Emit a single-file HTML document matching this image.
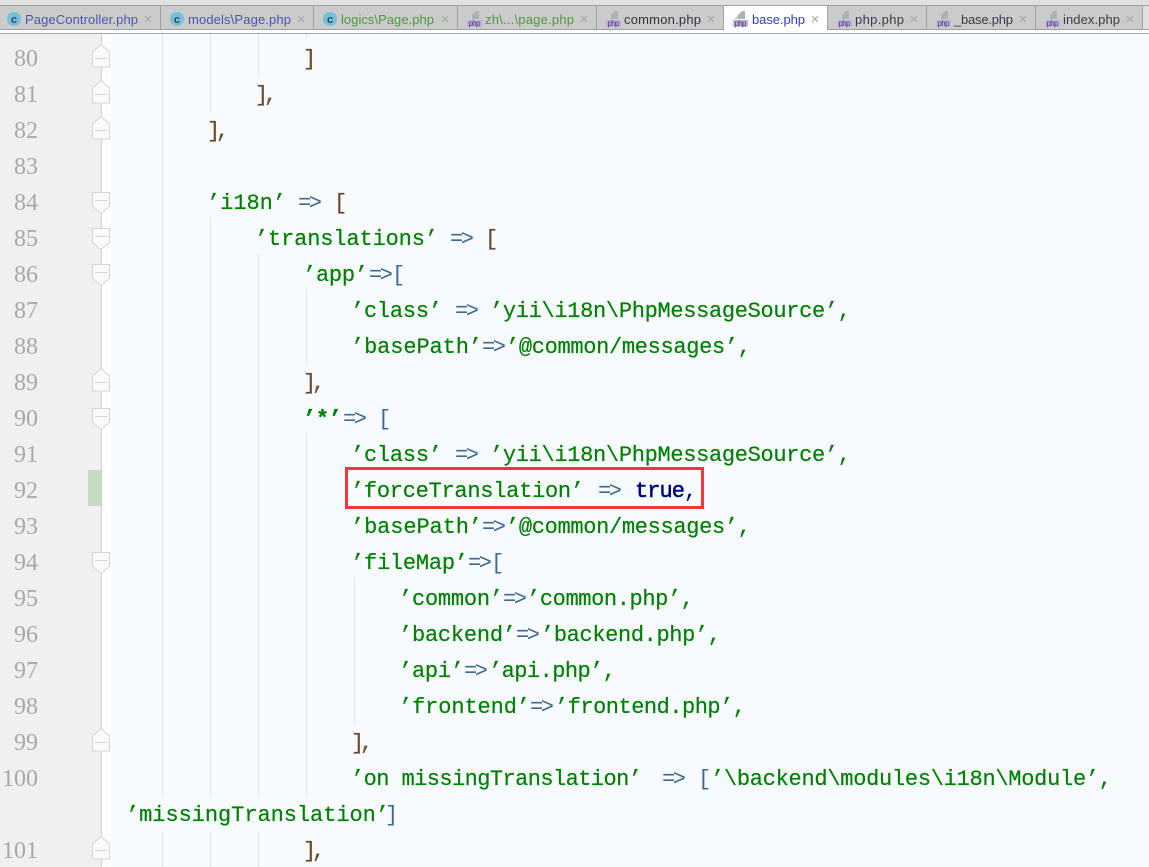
<!DOCTYPE html>
<html><head><meta charset="utf-8"><style>
html,body{margin:0;padding:0;width:1149px;height:867px;overflow:hidden;background:#f7faff}
svg{display:block}
.t{font:13px "Liberation Sans",sans-serif}
.c{font:22px "Liberation Mono",monospace;stroke-width:.2}
.s{fill:#008000;stroke:#008000}
.o{fill:#3d6a90;stroke:none}
.b{fill:#6b4a2c;stroke:#6b4a2c}
.bb{fill:#3a6a98;stroke:none}
.k{fill:#000080;stroke:#000080;stroke-width:.5}
.n{font:24px "Liberation Serif",serif;fill:#a8a8a8;text-anchor:end}
.g{stroke:#e3e3e3;stroke-width:1;fill:none}
.f{fill:#fafafa;stroke:#d4d4d4;stroke-width:1}
.m{stroke:#d4d4d4;stroke-width:1}
.x{font:15px "Liberation Sans",sans-serif;fill:#a9a9a9;text-anchor:middle}
.p{font:8px "Liberation Sans",sans-serif;fill:#4a4468;text-anchor:middle}
.cc{font:bold 11px "Liberation Sans",sans-serif;fill:#2c4a5c;text-anchor:middle}
</style></head><body>
<svg width="1149" height="867" xmlns="http://www.w3.org/2000/svg">
<defs>
<g id="php"><path d="M1 9L5 5V9Z" fill="#c9cfd3"/><path d="M5 9V5L9 1H12V9Z" fill="#a9b3ba"/><rect x="0" y="10" width="15" height="7" fill="#c2aee4"/><text class="p" x="7.500" y="16.200" textLength="12">php</text></g>
<g id="cl"><circle cx="7" cy="7" r="7" fill="#77bfdc"/><text class="cc" x="7" y="11">c</text></g>
<path id="up" class="f" d="M-8.500 9V-6L0-13.500 8.500-6V9Z"/>
<path id="dn" class="f" d="M-8.500-9.500H8.500V4.500L0 11.500-8.500 4.500Z"/>
</defs>
<rect width="1149" height="867" fill="#f7faff"/>
<!-- tab bar -->
<rect width="1149" height="33" fill="#fff"/>
<rect width="1149" height="5" fill="#e0e0e0"/>
<rect y="5" width="1143" height="24" fill="#cbcbcb"/>
<rect x="1143" y="5" width="6" height="24" fill="#e0e0e0"/>
<rect y="5" width="1149" height="1" fill="#a0a0a0"/>
<rect y="29" width="1149" height="1" fill="#a0a0a0"/>
<rect x="724" y="6" width="103" height="27" fill="#fff"/>
<rect y="33" width="1149" height="1" fill="#a8a8a8"/>
<g fill="#a0a0a0">
<rect x="160" y="5" width="1" height="24"/><rect x="313" y="5" width="1" height="24"/><rect x="457" y="5" width="1" height="24"/><rect x="596" y="5" width="1" height="24"/><rect x="723" y="5" width="1" height="24"/><rect x="827" y="5" width="1" height="24"/><rect x="926" y="5" width="1" height="24"/><rect x="1035" y="5" width="1" height="24"/><rect x="1142" y="5" width="1" height="24"/>
</g>
<use href="#cl" x="7" y="12"/><use href="#cl" x="170" y="12"/><use href="#cl" x="323" y="12"/>
<use href="#php" x="467" y="10"/><use href="#php" x="606" y="10"/><use href="#php" x="733" y="10"/><use href="#php" x="837" y="10"/><use href="#php" x="936" y="10"/><use href="#php" x="1045" y="10"/>
<text class="t" x="25" y="24" textLength="113" fill="#4a55b0">PageController.php</text>
<text class="t" x="188" y="24" textLength="103" fill="#4a55b0">models\Page.php</text>
<text class="t" x="341" y="24" textLength="93" fill="#4c9a3a">logics\Page.php</text>
<text class="t" x="485" y="24" textLength="89" fill="#4c9a3a">zh\...\page.php</text>
<text class="t" x="624" y="24" textLength="77" fill="#2f3340">common.php</text>
<text class="t" x="752" y="24" textLength="53" fill="#2a3fc0">base.php</text>
<text class="t" x="855" y="24" textLength="49" fill="#40384a">php.php</text>
<text class="t" x="954" y="24" textLength="59" fill="#40384a">_base.php</text>
<text class="t" x="1063" y="24" textLength="57" fill="#40384a">index.php</text>
<g class="x"><text x="148" y="24">×</text><text x="301" y="24">×</text><text x="445" y="24">×</text><text x="584" y="24">×</text><text x="711" y="24">×</text><text x="815" y="24">×</text><text x="914" y="24">×</text><text x="1023" y="24">×</text><text x="1130" y="24">×</text></g>
<!-- gutter -->
<rect x="0" y="34" width="101" height="833" fill="#f0f0f0"/>
<rect x="101" y="34" width="1" height="833" fill="#cfcfcf"/>
<rect x="102" y="34" width="9" height="833" fill="#fff"/>
<rect x="88" y="470" width="13" height="36" fill="#c4dcc0"/>
<g class="n">
<text x="38" y="66">80</text><text x="38" y="102">81</text><text x="38" y="138">82</text><text x="38" y="174">83</text><text x="38" y="210">84</text><text x="38" y="246">85</text><text x="38" y="282">86</text><text x="38" y="318">87</text><text x="38" y="354">88</text><text x="38" y="390">89</text><text x="38" y="426">90</text><text x="38" y="462">91</text><text x="38" y="498">92</text><text x="38" y="534">93</text><text x="38" y="570">94</text><text x="38" y="606">95</text><text x="38" y="642">96</text><text x="38" y="678">97</text><text x="38" y="714">98</text><text x="38" y="750">99</text><text x="38" y="786">100</text><text x="38" y="858">101</text>
</g>
<!-- fold marks -->
<use href="#up" x="101" y="58"/><use href="#up" x="101" y="94"/><use href="#up" x="101" y="130"/>
<use href="#dn" x="101" y="202"/><use href="#dn" x="101" y="238"/><use href="#dn" x="101" y="274"/>
<use href="#up" x="101" y="382"/><use href="#dn" x="101" y="418"/><use href="#dn" x="101" y="562"/>
<use href="#up" x="101" y="742"/><use href="#up" x="101" y="850"/>
<g class="m">
<path d="M95 58.500h12M95 94.500h12M95 130.500h12M95 200.500h12M95 236.500h12M95 272.500h12M95 382.500h12M95 416.500h12M95 560.500h12M95 742.500h12M95 850.500h12"/>
</g>
<!-- indent guides -->
<g class="g">
<path d="M162.500 34V796M162.500 832V867"/>
<path d="M210.500 34V112M210.500 218V796M210.500 832V867"/>
<path d="M258.500 34V76M258.500 254V796M258.500 832V867"/>
<path d="M306.500 34V38M306.500 290V364M306.500 434V796"/>
<path d="M354.500 578V724"/>
</g>
<!-- code -->
<g class="c">
<text class="b" x="303" y="65">]</text>
<text class="b" x="255" y="101">]</text><text class="b" x="264" y="101">,</text>
<text class="b" x="207" y="137">]</text><text class="b" x="216" y="137">,</text>

<text class="s" x="207" y="209" textLength="79">’i18n’</text>
<text class="o" x="298" y="209" textLength="24">=&gt;</text>
<text class="b" x="334" y="209">[</text>

<text class="s" x="255" y="245" textLength="183">’translations’</text>
<text class="o" x="450" y="245" textLength="24">=&gt;</text>
<text class="b" x="485" y="245">[</text>

<text class="s" x="303" y="281" textLength="65">’app’</text>
<text class="o" x="369" y="281" textLength="24">=&gt;</text>
<text class="bb" x="392" y="281">[</text>

<text class="s" x="351" y="317" textLength="91">’class’</text>
<text class="o" x="455" y="317" textLength="24">=&gt;</text>
<text class="s" x="490" y="317" textLength="361">’yii\i18n\PhpMessageSource’,</text>

<text class="s" x="351" y="353" textLength="131">’basePath’</text>
<text class="o" x="482" y="353" textLength="24">=&gt;</text>
<text class="s" x="506" y="353" textLength="245">’@common/messages’,</text>

<text class="b" x="303" y="389">]</text><text class="b" x="312" y="389">,</text>

<text class="s" x="303" y="425" textLength="39" style="font-weight:bold">’*’</text>
<text class="o" x="343" y="425" textLength="24">=&gt;</text>
<text class="bb" x="378" y="425">[</text>

<text class="s" x="351" y="461" textLength="91">’class’</text>
<text class="o" x="455" y="461" textLength="24">=&gt;</text>
<text class="s" x="490" y="461" textLength="361">’yii\i18n\PhpMessageSource’,</text>

<text class="s" x="351" y="497" textLength="233">’forceTranslation’</text>
<text class="o" x="598" y="497" textLength="24">=&gt;</text>
<text class="k" x="635" y="497" textLength="50">true</text>
<text class="k" x="684" y="497" style="stroke-width:.1">,</text>

<text class="s" x="351" y="533" textLength="131">’basePath’</text>
<text class="o" x="482" y="533" textLength="24">=&gt;</text>
<text class="s" x="506" y="533" textLength="245">’@common/messages’,</text>

<text class="s" x="351" y="569" textLength="117">’fileMap’</text>
<text class="o" x="468" y="569" textLength="24">=&gt;</text>
<text class="bb" x="491" y="569">[</text>

<text class="s" x="399" y="605" textLength="104">’common’</text>
<text class="o" x="503" y="605" textLength="24">=&gt;</text>
<text class="s" x="527" y="605" textLength="167">’common.php’,</text>

<text class="s" x="399" y="641" textLength="117">’backend’</text>
<text class="o" x="516" y="641" textLength="24">=&gt;</text>
<text class="s" x="541" y="641" textLength="180">’backend.php’,</text>

<text class="s" x="399" y="677" textLength="65">’api’</text>
<text class="o" x="464" y="677" textLength="24">=&gt;</text>
<text class="s" x="489" y="677" textLength="127">’api.php’,</text>

<text class="s" x="399" y="713" textLength="131">’frontend’</text>
<text class="o" x="530" y="713" textLength="24">=&gt;</text>
<text class="s" x="555" y="713" textLength="191">’frontend.php’,</text>

<text class="b" x="351" y="749">]</text><text class="b" x="360" y="749">,</text>

<text class="s" x="351" y="785" textLength="291">’on missingTranslation’</text>
<text class="o" x="662" y="785" textLength="24">=&gt;</text>
<text class="bb" x="698" y="785">[</text>
<text class="s" x="711" y="785" textLength="401">’\backend\modules\i18n\Module’,</text>

<text class="s" x="126" y="821" textLength="263">’missingTranslation’</text>
<text class="bb" x="385" y="821">]</text>

<text class="b" x="303" y="857">]</text><text class="b" x="312" y="857">,</text>
</g>
<rect x="346.500" y="468.500" width="356" height="39" fill="none" stroke="#f4333a" stroke-width="3"/>
</svg>
</body></html>
